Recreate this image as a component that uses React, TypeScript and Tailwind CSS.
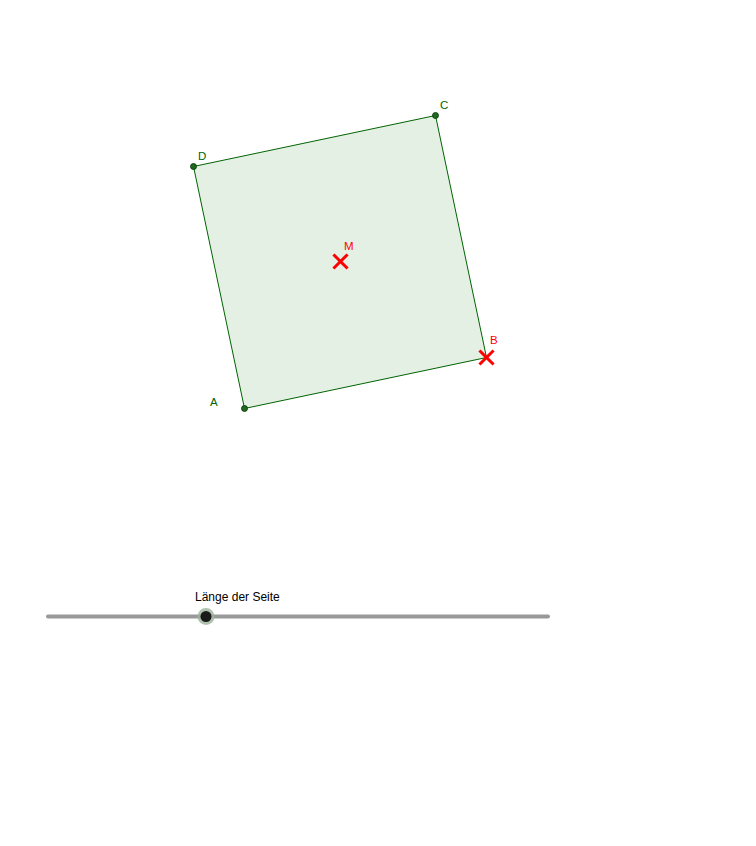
import React from "react";

export default function App() {
  const font = '"Liberation Sans", Arial, sans-serif';
  return (
    <div className="w-[756px] h-[846px] bg-white overflow-hidden">
      <svg width="756" height="846" viewBox="0 0 756 846" className="block">
        <polygon
          points="244.5,408.5 486.5,357.5 435.5,115.5 193.5,166.5"
          fill="#e5f0e5"
          stroke="#006400"
          strokeWidth="1"
        />
        <g fill="#1f6a1f" stroke="#003300" strokeWidth="0.8">
          <circle cx="244.5" cy="408.5" r="3" />
          <circle cx="435.5" cy="115.5" r="3" />
          <circle cx="193.5" cy="166.5" r="3" />
        </g>
        <g stroke="#ff0000" strokeWidth="3" strokeLinecap="square">
          <line x1="334.5" y1="255.5" x2="346.5" y2="267.5" />
          <line x1="346.5" y1="255.5" x2="334.5" y2="267.5" />
          <line x1="480.5" y1="351.5" x2="492.5" y2="363.5" />
          <line x1="492.5" y1="351.5" x2="480.5" y2="363.5" />
        </g>
        <g fontFamily={font} fontSize="11.5">
          <text x="440" y="109" fill="#006400">C</text>
          <text x="198" y="160" fill="#006400">D</text>
          <text x="210" y="406" fill="#006400">A</text>
          <text x="344" y="250" fill="#ff0000">M</text>
          <text x="490" y="344" fill="#ff0000">B</text>
        </g>
        <text x="195" y="601" fill="#000000" fontFamily={font} fontSize="12">
          Länge der Seite
        </text>
        <line x1="48" y1="616.5" x2="548" y2="616.5" stroke="#999999" strokeWidth="4" strokeLinecap="round" />
        <circle cx="206" cy="616.5" r="8.5" fill="#9ab39a" opacity="0.8" />
        <circle cx="206" cy="616.5" r="5.5" fill="#1a1a1a" />
      </svg>
    </div>
  );
}
